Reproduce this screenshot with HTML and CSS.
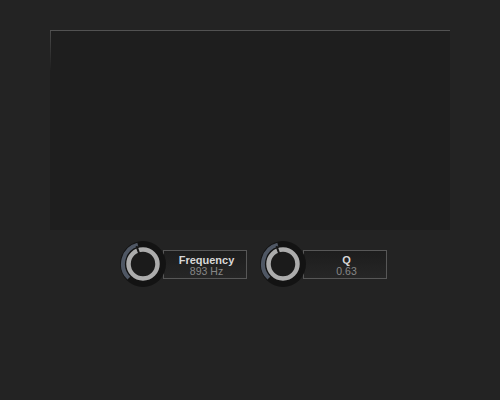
FILE: index.html
```html
<!DOCTYPE html>
<html>
<head>
<meta charset="utf-8">
<link rel="stylesheet" href="styles.css">
</head>
<body>
<div class="page">
  <div class="panel"></div>
  <div class="controls">
    <div class="control">
      <svg class="knob" width="46" height="46" viewBox="0 0 46 46">
        <circle cx="23" cy="23" r="23" fill="#131313"/>
        <path d="M8.86 37.14 A20 20 0 0 1 17.82 3.68" fill="none" stroke="#4f5764" stroke-width="4"/>
        <circle cx="23" cy="23" r="14.5" fill="#1b1b1b" stroke="#acacac" stroke-width="4.5"/>
        <line x1="19.58" y1="13.6" x2="16.5" y2="5.2" stroke="#161616" stroke-width="2"/>
      </svg>
      <div class="box">
        <div class="label">Frequency</div>
        <div class="value">893 Hz</div>
      </div>
    </div>
    <div class="control">
      <svg class="knob" width="46" height="46" viewBox="0 0 46 46">
        <circle cx="23" cy="23" r="23" fill="#131313"/>
        <path d="M8.86 37.14 A20 20 0 0 1 17.82 3.68" fill="none" stroke="#4f5764" stroke-width="4"/>
        <circle cx="23" cy="23" r="14.5" fill="#1b1b1b" stroke="#acacac" stroke-width="4.5"/>
        <line x1="19.58" y1="13.6" x2="16.5" y2="5.2" stroke="#161616" stroke-width="2"/>
      </svg>
      <div class="box">
        <div class="label">Q</div>
        <div class="value">0.63</div>
      </div>
    </div>
  </div>
</div>
</body>
</html>
```
FILE: styles.css
```css
html, body {
  margin: 0;
  padding: 0;
  background: #232323;
  font-family: "Liberation Sans", Arial, sans-serif;
}
.page {
  width: 500px;
  height: 400px;
  padding-top: 30px;
  box-sizing: border-box;
}
.panel {
  width: 400px;
  height: 200px;
  margin: 0 0 0 50px;
  box-sizing: border-box;
  border-top: 1px solid #525252;
  background:
    linear-gradient(#4a4a4a, rgba(74,74,74,0) 40px) left top / 1px 100% no-repeat,
    #1e1e1e;
}
.controls {
  display: flex;
  margin-top: 11px;
  margin-left: 120px;
  gap: 13px;
}
.control {
  display: flex;
  align-items: center;
}
.knob {
  display: block;
  position: relative;
  z-index: 1;
}
.box {
  width: 84px;
  height: 29px;
  box-sizing: border-box;
  margin-left: -3px;
  border: 1px solid #575757;
  background: linear-gradient(#1d1d1d, #262626);
  display: flex;
  flex-direction: column;
  align-items: center;
  justify-content: center;
  padding: 3px 0 0 3px;
}
.label {
  font-weight: bold;
  font-size: 11px;
  line-height: 11px;
  color: #d8d8d8;
}
.value {
  font-size: 10.5px;
  line-height: 10px;
  color: #878787;
}
```
